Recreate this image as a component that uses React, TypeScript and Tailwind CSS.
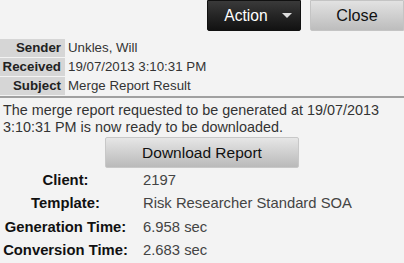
const header = [
  { label: "Sender", value: "Unkles, Will" },
  { label: "Received", value: "19/07/2013 3:10:31 PM" },
  { label: "Subject", value: "Merge Report Result" },
];

const details = [
  { label: "Client:", value: "2197" },
  { label: "Template:", value: "Risk Researcher Standard SOA" },
  { label: "Generation Time:", value: "6.958 sec" },
  { label: "Conversion Time:", value: "2.683 sec" },
];

export default function App() {
  return (
    <div className="h-[263px] w-[404px] overflow-hidden bg-[#f3f3f3] font-['Liberation_Sans',Arial,sans-serif] text-[#333]">
      <div className="flex h-[31px] justify-end gap-[9px]">
        <button className="flex h-[31px] w-[94px] items-center justify-center gap-[14px] rounded-b-[2px] border border-[#111] bg-gradient-to-b from-[#3a3a3a] to-[#121212] pl-[8px] text-[15.6px] text-white">
          Action
          <span className="h-0 w-0 border-x-[5px] border-t-[5px] border-x-transparent border-t-[#ddd]" />
        </button>
        <button className="h-[31px] w-[94px] rounded-bl-[2px] border border-[#c4c4c4] bg-gradient-to-b from-[#e2e2e2] to-[#bdbdbd] text-[16.2px] text-[#111]">
          Close
        </button>
      </div>

      <div className="mt-[8px] flex flex-col gap-[1px]">
        {header.map((row) => (
          <div key={row.label} className="flex h-[18px] items-center text-[13.3px] leading-[18px]">
            <div className="w-[65px] bg-[#d6d6d6] pr-[4px] text-right font-bold text-[#222]">{row.label}</div>
            <div className="pl-[3px] text-[#333]">{row.value}</div>
          </div>
        ))}
      </div>
      <div className="mt-[1px] h-[2px] bg-[#a0a0a0]" />

      <p className="mt-[4px] px-[3px] text-[14.4px] leading-[17px] text-[#333]">
        The merge report requested to be generated at 19/07/2013 3:10:31 PM is now ready to be downloaded.
      </p>

      <div className="mt-[1px] flex pl-[105px]">
        <button className="h-[31px] w-[194px] rounded-[2px] border border-[#c8c8c8] bg-gradient-to-b from-[#e6e6e6] to-[#bababa] text-[15.5px] text-[#111]">
          Download Report
        </button>
      </div>

      <div className="flex flex-col">
        {details.map((row) => (
          <div key={row.label} className="flex h-[23.5px] items-center text-[14.8px]">
            <div className="w-[131px] text-center font-bold text-[#111]">{row.label}</div>
            <div className="pl-[12px] text-[#444]">{row.value}</div>
          </div>
        ))}
      </div>
    </div>
  );
}
